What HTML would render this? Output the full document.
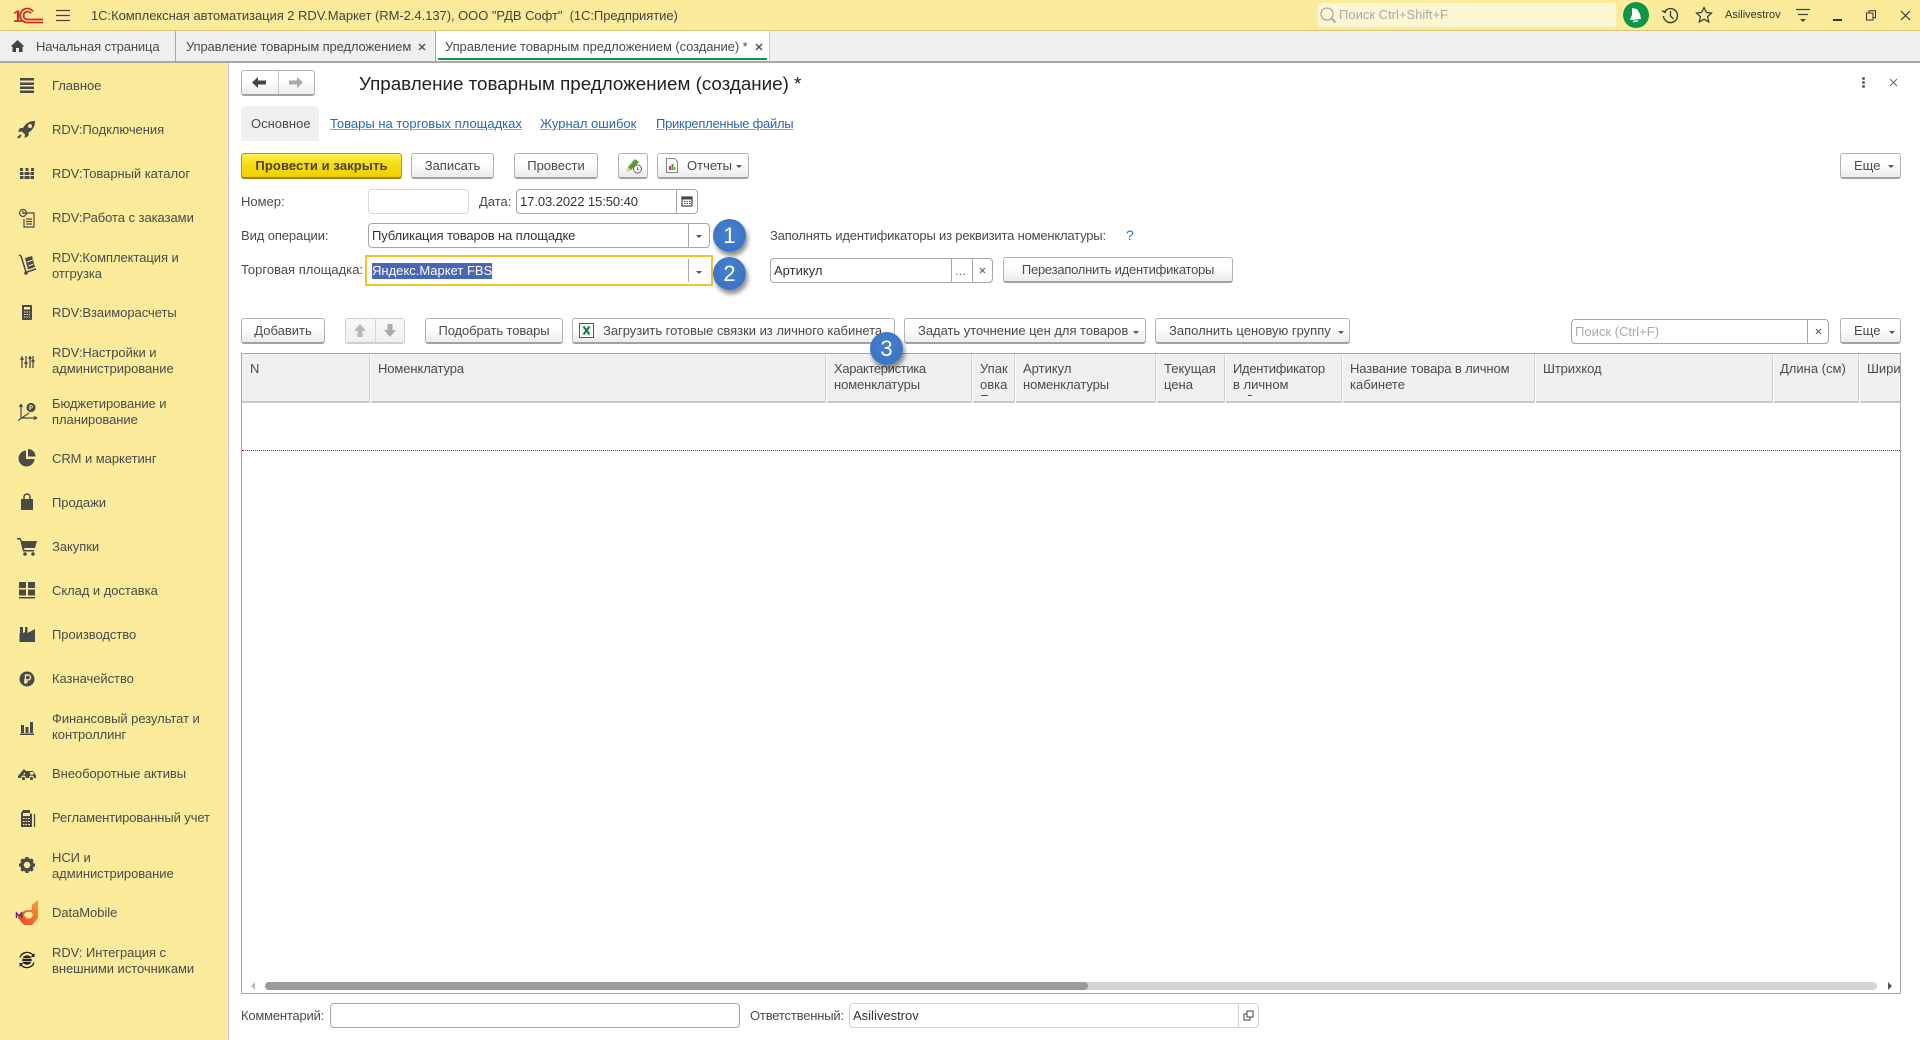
<!DOCTYPE html>
<html lang="ru"><head><meta charset="utf-8"><title>Управление товарным предложением</title>
<style>
html,body{margin:0;padding:0;width:1920px;height:1040px;overflow:hidden;background:#fff}
body{position:relative;font:13px/16px "Liberation Sans",Arial,sans-serif;color:#4b4b4b}
div,span,svg{position:absolute;box-sizing:border-box}
.t{white-space:pre;height:16px;line-height:16px}
.b{display:flex;align-items:center;justify-content:center;white-space:nowrap;height:26px;padding-top:1px;border:1px solid #b4b4b4;border-bottom:2px solid #a2a2a2;border-radius:3px;background:linear-gradient(#fff,#fff 40%,#ebebeb);color:#4b4b4b}
.in{border:1px solid #a6a6a6;border-radius:4px;background:#fff;height:25px}
.sep{top:0;bottom:0;width:1px;background:#a6a6a6}
.tri{width:0;height:0;border-left:3px solid transparent;border-right:3px solid transparent;border-top:3px solid #555}
.c{width:33px;height:33px;border-radius:50%;background:radial-gradient(circle at 50% 40%,#4480d0,#3a70c0);box-shadow:2px 4px 5px rgba(0,0,0,.45);color:#fff;font-size:22px;line-height:33px;text-align:center}
.s{left:52px;color:#4b4b4b;letter-spacing:-.05px}
.i{left:15px;width:24px;height:24px}
.cs{top:1px;height:49px;width:2px;background:#d2d2d2;border-right:1px solid #fff}
.l{color:#2a66b8;text-decoration:underline;text-decoration-color:#7ea6d8}
</style></head><body>

<!-- title bar -->
<div style="left:0;top:0;width:1920px;height:31px;background:#fbeb9b;border-bottom:1px solid #d9c873"></div>
<svg style="left:12px;top:6px" width="34" height="20" viewBox="0 0 34 20"><text x="1" y="16" font-family="Liberation Sans" font-weight="700" font-size="17" fill="#d5262c">1</text><path d="M21 5.500A7 7 0 1 0 15 16.500H31M19 7.500A4 4 0 1 0 15 13.500H31" fill="none" stroke="#d5262c" stroke-width="1.700"/></svg>
<svg style="left:55px;top:8px" width="16" height="16"><path d="M1 2.500h14M1 7.500h14M1 12.500h14" stroke="#444" stroke-width="1.300"/></svg>
<div class="t" style="left:91px;top:8px;font-size:13px;letter-spacing:-.05px;color:#444">1С:Комплексная автоматизация 2 RDV.Маркет (RM-2.4.137), ООО "РДВ Софт"  (1С:Предприятие)</div>
<div style="left:1318px;top:3px;width:298px;height:24px;background:#fcf6d2;border-radius:3px"></div>
<svg style="left:1319px;top:6px" width="18" height="18"><circle cx="8" cy="8" r="6" fill="none" stroke="#aaa" stroke-width="1.300"/><path d="M12.500 12.500l4 4" stroke="#aaa" stroke-width="2"/></svg>
<div class="t" style="left:1339px;top:7px;color:#aaa;font-size:13px">Поиск Ctrl+Shift+F</div>
<div style="left:1623px;top:2px;width:26px;height:26px;border-radius:50%;background:#0e9548"></div>
<svg style="left:1627px;top:6px" width="18" height="18" viewBox="0 0 18 18"><path d="M5 2l5 1 3 5 1 5-11 1 2-5z" fill="#fff"/><path d="M6 15.500l5-.5" stroke="#fff" stroke-width="1.500"/></svg>
<svg style="left:1661px;top:6px" width="19" height="19" viewBox="0 0 19 19" fill="none" stroke="#333" stroke-width="1.300"><path d="M3.500 6A7 7 0 1 1 2.500 10"/><path d="M1 4.500l3 2 1.500-3" /><path d="M9.500 5v5l3 3"/></svg>
<svg style="left:1695px;top:6px" width="18" height="18" viewBox="0 0 18 18"><path d="M9 1.500l2.300 5 5.200.6-3.900 3.500 1.100 5.300L9 13.200l-4.700 2.700 1.100-5.300-3.900-3.500 5.200-.6z" fill="none" stroke="#333" stroke-width="1.200"/></svg>
<div class="t" style="left:1725px;top:7px;font-size:11px;color:#333">Asilivestrov</div>
<svg style="left:1795px;top:8px" width="16" height="16"><path d="M1 1.500h14M3 6.500h10" stroke="#444" stroke-width="1.200"/><path d="M5 11h6l-3 3z" fill="#444"/></svg>
<div style="left:1833px;top:19px;width:9px;height:1.500px;background:#333"></div>
<svg style="left:1866px;top:10px" width="11" height="11" fill="none" stroke="#333"><rect x=".5" y="3" width="6.500" height="7"/><path d="M3 3V.8h6.500v7H7"/></svg>
<svg style="left:1900px;top:10px" width="11" height="11"><path d="M1 1l9 9M10 1l-9 9" stroke="#333" stroke-width="1.100"/></svg>

<!-- tabs -->
<div style="left:0;top:31px;width:1920px;height:32px;background:#f0f0f0;border-bottom:2px solid #a8a8a8"></div>
<div style="left:175px;top:31px;width:1px;height:30px;background:#a8a8a8"></div>
<div style="left:435px;top:31px;width:335px;height:30px;background:#fff;border-left:1px solid #a8a8a8;border-right:1px solid #ccc"></div>
<div style="left:438px;top:58px;width:329px;height:2px;background:#0e9548"></div>
<svg style="left:10px;top:39px" width="15" height="14"><path d="M7.500 1L0.500 7.500h2V13h3.500V9h3v4H12.500V7.500h2z" fill="#444"/></svg>
<div class="t" style="left:36px;top:39px;letter-spacing:-.13px">Начальная страница</div>
<div class="t" style="left:186px;top:39px;letter-spacing:-.13px">Управление товарным предложением</div>
<svg style="left:418px;top:43px" width="8" height="8"><path d="M1 1l6 6M7 1l-6 6" stroke="#555" stroke-width="1.500"/></svg>
<div class="t" style="left:445px;top:39px;letter-spacing:-.08px">Управление товарным предложением (создание) *</div>
<svg style="left:755px;top:43px" width="8" height="8"><path d="M1 1l6 6M7 1l-6 6" stroke="#555" stroke-width="1.500"/></svg>

<!-- sidebar -->
<div style="left:0;top:63px;width:229px;height:977px;background:#fbeb9b;border-right:1px solid #ccc"></div>
<div class="t s" style="top:78px">Главное</div>
<div class="t s" style="top:122px">RDV:Подключения</div>
<div class="t s" style="top:166px">RDV:Товарный каталог</div>
<div class="t s" style="top:210px">RDV:Работа с заказами</div>
<div class="t s" style="top:250px">RDV:Комплектация и</div>
<div class="t s" style="top:266px">отгрузка</div>
<div class="t s" style="top:305px">RDV:Взаиморасчеты</div>
<div class="t s" style="top:345px">RDV:Настройки и</div>
<div class="t s" style="top:361px">администрирование</div>
<div class="t s" style="top:396px">Бюджетирование и</div>
<div class="t s" style="top:412px">планирование</div>
<div class="t s" style="top:451px">CRM и маркетинг</div>
<div class="t s" style="top:495px">Продажи</div>
<div class="t s" style="top:539px">Закупки</div>
<div class="t s" style="top:583px">Склад и доставка</div>
<div class="t s" style="top:627px">Производство</div>
<div class="t s" style="top:671px">Казначейство</div>
<div class="t s" style="top:711px">Финансовый результат и</div>
<div class="t s" style="top:727px">контроллинг</div>
<div class="t s" style="top:766px">Внеоборотные активы</div>
<div class="t s" style="top:810px;letter-spacing:-.1px">Регламентированный учет</div>
<div class="t s" style="top:850px">НСИ и</div>
<div class="t s" style="top:866px">администрирование</div>
<div class="t s" style="top:905px">DataMobile</div>
<div class="t s" style="top:945px">RDV: Интеграция с</div>
<div class="t s" style="top:961px">внешними источниками</div>

<!-- sidebar icons -->
<svg class="i" style="top:73px" viewBox="0 0 24 24" fill="#4a4a4a"><rect x="5" y="5" width="14" height="2.500"/><rect x="5" y="9.500" width="14" height="2.500"/><rect x="5" y="13.500" width="14" height="2.500"/><rect x="5" y="17.500" width="14" height="2.500"/></svg>
<svg class="i" style="top:117px" viewBox="0 0 24 24"><path d="M20 4c-6 0-10 3-12 7H5l-2 4 4-.5 3 3L9.500 21l4-2v-3.500c4-2 6.500-6 6.500-11.500z" fill="#4a4a4a"/><circle cx="15" cy="9" r="2" fill="#fbeb9b"/><path d="M3 21l3-3" stroke="#4a4a4a" stroke-width="2"/></svg>
<svg class="i" style="top:162px" viewBox="0 0 24 24" fill="#4a4a4a"><path d="M5 6h3v3H5zM10.500 6h3v3h-3zM16 6h3v3h-3zM5 10h14v3H5zM5 14h14v3H5z"/><path d="M9 9v8M15 9v8" stroke="#fbeb9b"/></svg>
<svg class="i" style="top:206px" viewBox="0 0 24 24" fill="none" stroke="#4a4a4a" stroke-width="1.200"><path d="M9 7h10v14H9V13"/><circle cx="8" cy="7" r="3.500"/><path d="M8 5v2l1.500 1M11 13h6M11 15.500h6M11 18h6"/></svg>
<svg class="i" style="top:252px" viewBox="0 0 24 24"><path d="M4 3l2 1 5 16" fill="none" stroke="#4a4a4a" stroke-width="1.500"/><circle cx="11" cy="21" r="1.800" fill="#4a4a4a"/><path d="M10 6l7-2 3 11-7 2.500z" fill="#4a4a4a"/><path d="M12 10l6-2M13.500 14l5-2" stroke="#fbeb9b"/><path d="M12 20l9-3" stroke="#4a4a4a" stroke-width="1.500"/></svg>
<svg class="i" style="top:301px" viewBox="0 0 24 24"><rect x="7" y="4" width="10" height="15" rx="1" fill="#4a4a4a"/><rect x="9" y="6" width="6" height="2.500" fill="#fbeb9b"/><path d="M9 11h1.500M11.500 11H13M14 11h1M9 13.500h1.500M11.500 13.500H13M14 13.500h1M9 16h1.500M11.500 16H13M14 16h1" stroke="#fbeb9b"/></svg>
<svg class="i" style="top:349px" viewBox="0 0 24 24" stroke="#4a4a4a" stroke-width="1.300"><path d="M7 7v12M11 7v12M15 7v12M18 7v12"/><path d="M5.500 10h3M9.500 14h3M13.500 9h3M16.500 12h3" stroke-width="2"/></svg>
<svg class="i" style="top:400px" viewBox="0 0 24 24" fill="none" stroke="#4a4a4a" stroke-width="1.200"><path d="M6 4v14h16M6 4L4.500 7M6 4l1.500 3M22 18l-3-1.500M22 18l-3 1.500M3 20.500L14 13"/><circle cx="16" cy="7.500" r="4" fill="#4a4a4a"/><path d="M15 10V5.500h1.500a1.300 1.300 0 0 1 0 2.500H14" stroke="#fbeb9b" stroke-width=".9"/></svg>
<svg class="i" style="top:446px" viewBox="0 0 24 24" fill="#4a4a4a"><path d="M11 4.500a8 8 0 1 0 8.500 8.500H11z"/><path d="M13 3v7.500h7.500A7.500 7.500 0 0 0 13 3z"/></svg>
<svg class="i" style="top:490px" viewBox="0 0 24 24"><path d="M6 9h12v11H6z" fill="#4a4a4a"/><path d="M9 11V7a3 3 0 0 1 6 0v4" fill="none" stroke="#4a4a4a" stroke-width="1.500"/></svg>
<svg class="i" style="top:534px" viewBox="0 0 24 24" fill="#4a4a4a"><path d="M2 4h3.500L7 7h15l-2 7H9l.5 2H19v1.500H8L5 5.500H2z"/><circle cx="10" cy="20" r="1.800"/><circle cx="18" cy="20" r="1.800"/></svg>
<svg class="i" style="top:578px" viewBox="0 0 24 24" fill="#4a4a4a"><path d="M4 4h7v6H4zM13 4h7v6h-7zM4 11.500h7v6H4zM13 11.500h7v6h-7zM4 19h16v1.500H4z"/></svg>
<svg class="i" style="top:622px" viewBox="0 0 24 24" fill="#4a4a4a"><path d="M5 5h3v6l2-1V5h2.500v6L20 7v13H4.500V11.500L5 11z"/></svg>
<svg class="i" style="top:667px" viewBox="0 0 24 24"><circle cx="12" cy="12" r="7.500" fill="#4a4a4a"/><path d="M10.500 17V8h2.500a2.400 2.400 0 0 1 0 5H9M9 15h4" fill="none" stroke="#fbeb9b" stroke-width="1.400"/></svg>
<svg class="i" style="top:715px" viewBox="0 0 24 24" fill="#4a4a4a"><path d="M6 10h3v8H6zM10.500 12h3v6h-3zM15 7h3v11h-3zM5 18.500h14V20H5z"/></svg>
<svg class="i" style="top:761px" viewBox="0 0 24 24" fill="#4a4a4a"><path d="M3 15l6-7 2 2-3 3.500h2V10h8l3 4.500V17h-2a2.500 2.500 0 0 0-5 0H11a2.500 2.500 0 0 0-5 0H3z"/><circle cx="8.500" cy="17.500" r="1.600"/><circle cx="16.500" cy="17.500" r="1.600"/><rect x="15" y="11" width="3.500" height="2.500" fill="#fbeb9b"/></svg>
<svg class="i" style="top:806px" viewBox="0 0 24 24"><path d="M6 7l2-3h7v3l2 1v13H6z" fill="#4a4a4a"/><rect x="8" y="7" width="7" height="3" fill="#fbeb9b"/><path d="M8 12.500h1.500M10.500 12.500H12M13 12.500h2M8 15.500h1.500M10.500 15.500H12M13 15.500h2M8 18.500h1.500M10.500 18.500H12M13 18.500h2" stroke="#fbeb9b"/><path d="M19.500 8v13" stroke="#4a4a4a" stroke-width="1.300"/></svg>
<svg class="i" style="top:853px" viewBox="0 0 24 24"><circle cx="12" cy="12" r="5" fill="none" stroke="#4a4a4a" stroke-width="3.500"/><path d="M12 4v3M12 17v3M4 12h3M17 12h3M6.300 6.300l2.200 2.200M15.500 15.500l2.200 2.200M6.300 17.700l2.200-2.200M15.500 8.500l2.200-2.200" stroke="#4a4a4a" stroke-width="3"/></svg>
<svg style="left:15px;top:899px" width="25" height="27" viewBox="0 0 25 27"><defs><linearGradient id="dm" x1="0" y1="1" x2="1" y2="0"><stop offset="0" stop-color="#ee3b2f"/><stop offset="1" stop-color="#f7a12a"/></linearGradient></defs><path d="M23 1v18l-6 7H9l-6-7 3-5 5-3h6V6z" fill="url(#dm)"/><path d="M8.500 15.500l3-2.500h5l1.500 3-2.500 3.500h-4z" fill="#fbeb9b"/><path d="M1.500 19v-5l2.500 3 2.500-3v5" fill="none" stroke="#5a2a8a" stroke-width="1.400"/></svg>
<svg class="i" style="top:948px" viewBox="0 0 24 24" fill="none" stroke="#222"><path d="M5 9.500A7.500 7.500 0 0 1 18.500 8M19 14.500A7.500 7.500 0 0 1 5.500 16" stroke-width="1.300"/><path d="M19.500 5v4h-4zM4.500 19v-4h4z" fill="#222" stroke="none"/><circle cx="12" cy="12" r="4.800" fill="#222" stroke="none"/><path d="M7.500 10.500h9M7.500 13.500h9" stroke="#fbeb9b" stroke-width=".8"/></svg>

<!-- form header -->
<div class="b" style="left:241px;top:70px;width:74px;height:26px"></div>
<div style="left:278px;top:71px;width:1px;height:23px;background:#c8c8c8"></div>
<svg style="left:251px;top:76px" width="16" height="13"><path d="M1 6.500L7 1v3.500h8v4H7V12z" fill="#444"/></svg>
<svg style="left:288px;top:76px" width="16" height="13"><path d="M15 6.500L9 1v3.500H1v4h8V12z" fill="#aaa"/></svg>
<div class="t" style="left:359px;top:72px;height:24px;line-height:24px;font-size:18.800px;color:#222">Управление товарным предложением (создание) *</div>
<div style="left:1862px;top:77px;width:3px;height:3px;background:#666;border-radius:50%"></div>
<div style="left:1862px;top:81px;width:3px;height:3px;background:#666;border-radius:50%"></div>
<div style="left:1862px;top:85px;width:3px;height:3px;background:#666;border-radius:50%"></div>
<svg style="left:1889px;top:78px" width="9" height="9"><path d="M1 1l7 7M8 1l-7 7" stroke="#666"/></svg>

<div style="left:241px;top:106px;width:78px;height:35px;background:#f0f0f0;border-radius:3px 3px 0 0"></div>
<div class="t" style="left:251px;top:116px">Основное</div>
<div class="t l" style="left:330px;top:116px">Товары на торговых площадках</div>
<div class="t l" style="left:540px;top:116px">Журнал ошибок</div>
<div class="t l" style="left:656px;top:116px;letter-spacing:-.27px">Прикрепленные файлы</div>

<!-- command bar -->
<div class="b" style="left:241px;top:153px;width:161px;background:linear-gradient(#fff05a,#f7dc10 45%,#f2d000);border-color:#b49a10;border-bottom-color:#9a8410;color:#47430a;font-weight:700;letter-spacing:.1px">Провести и закрыть</div>
<div class="b" style="left:411px;top:153px;width:83px">Записать</div>
<div class="b" style="left:514px;top:153px;width:84px">Провести</div>
<div class="b" style="left:618px;top:153px;width:30px"></div>
<svg style="left:624px;top:157px" width="20" height="18" viewBox="0 0 20 18"><path d="M2 15l2-5 7-8 4 3-8 8z" fill="#52a038"/><path d="M2 15l2-5 3 3z" fill="#e8c890"/><circle cx="13.500" cy="12" r="4" fill="#fff" stroke="#666"/><path d="M13.500 10v2.200l1.500.8" stroke="#666" fill="none"/></svg>
<div class="b" style="left:657px;top:153px;width:92px;justify-content:flex-start;padding-left:29px">Отчеты</div>
<svg style="left:665px;top:158px" width="14" height="15" viewBox="0 0 14 15"><path d="M1.500.5h8l3 3v11h-11z" fill="#fff" stroke="#888"/><rect x="4" y="8" width="2" height="4" fill="#d33"/><rect x="6.500" y="6" width="2" height="6" fill="#3a3"/><rect x="9" y="9" width="1.500" height="3" fill="#d80"/></svg>
<div class="tri" style="left:736px;top:165px"></div>
<div class="b" style="left:1840px;top:153px;width:61px;justify-content:flex-start;padding-left:13px">Еще</div>
<div class="tri" style="left:1888px;top:165px"></div>

<!-- fields -->
<div class="t" style="left:241px;top:194px">Номер:</div>
<div class="in" style="left:368px;top:189px;width:101px;border-color:#d8d8d8"></div>
<div class="t" style="left:479px;top:194px">Дата:</div>
<div class="in" style="left:516px;top:189px;width:182px"><div class="sep" style="left:159px"></div></div>
<div class="t" style="left:520px;top:194px;color:#333;letter-spacing:-.07px">17.03.2022 15:50:40</div>
<svg style="left:681px;top:195px" width="12" height="12" viewBox="0 0 12 12"><rect x="1" y="2" width="10" height="9" fill="none" stroke="#444" stroke-width="1.200"/><rect x="1" y="2" width="10" height="2.500" fill="#444"/><path d="M3 6.500h1.500M5.500 6.500H7M8 6.500h1.500M3 8.500h1.500M5.500 8.500H7M8 8.500h1.500" stroke="#444"/></svg>

<div class="t" style="left:241px;top:228px;letter-spacing:-.1px">Вид операции:</div>
<div class="in" style="left:368px;top:223px;width:342px"><div class="sep" style="left:319px"></div></div>
<div class="t" style="left:372px;top:228px;color:#333;letter-spacing:-.12px">Публикация товаров на площадке</div>
<div class="tri" style="left:696px;top:235px"></div>

<div class="t" style="left:241px;top:262px">Торговая площадка:</div>
<div style="left:365px;top:255px;width:348px;height:31px;border:2px solid #f5c52c;background:#fff"></div>
<div style="left:688px;top:259px;width:1px;height:23px;background:#aaa"></div>
<div class="tri" style="left:696px;top:271px"></div>
<div class="t" style="left:372px;top:263px;height:16px;background:#4a66b8;color:#fff">Яндекс.Маркет FBS</div>

<div class="t" style="left:770px;top:228px;letter-spacing:-.19px">Заполнять идентификаторы из реквизита номенклатуры:</div>
<div class="t" style="left:1126px;top:227px;color:#1e78c0;font-size:14px">?</div>
<div class="in" style="left:770px;top:258px;width:223px"><div class="sep" style="left:180px"></div><div class="sep" style="left:201px"></div></div>
<div class="t" style="left:774px;top:263px;color:#333">Артикул</div>
<div class="t" style="left:955px;top:263px;color:#666">...</div>
<svg style="left:979px;top:267px" width="7" height="7"><path d="M1 1l5 5M6 1l-5 5" stroke="#666" stroke-width="1.200"/></svg>
<div class="b" style="left:1003px;top:257px;width:230px;letter-spacing:-.25px">Перезаполнить идентификаторы</div>

<div class="c" style="left:713px;top:219px">1</div>
<div class="c" style="left:713px;top:257px">2</div>

<!-- table toolbar -->
<div class="b" style="left:241px;top:318px;width:84px">Добавить</div>
<div class="b" style="left:345px;top:318px;width:60px;border-color:#d0d0d0;background:linear-gradient(#f8f8f8,#f0f0f0)"></div>
<div style="left:375px;top:319px;width:1px;height:23px;background:#d4d4d4"></div>
<svg style="left:353px;top:323px" width="14" height="15"><path d="M7 1l6 7H9.500v6h-5V8H1z" fill="#b4b9bb"/></svg>
<svg style="left:383px;top:323px" width="14" height="15"><path d="M7 14l6-7H9.500V1h-5v6H1z" fill="#a8adb0"/></svg>
<div class="b" style="left:425px;top:318px;width:138px;letter-spacing:-.1px">Подобрать товары</div>
<div class="b" style="left:572px;top:318px;width:323px;justify-content:flex-start;padding-left:30px;letter-spacing:-.03px">Загрузить готовые связки из личного кабинета</div>
<svg style="left:579px;top:323px" width="15" height="15"><rect x=".5" y=".5" width="14" height="14" fill="#fff" stroke="#1f7a4a"/><rect x="2" y="2" width="11" height="11" fill="#eef5ee"/><path d="M4.500 3.500l6 8M10.500 3.500l-6 8" stroke="#1f7a4a" stroke-width="2"/></svg>
<div class="b" style="left:904px;top:318px;width:242px;justify-content:flex-start;padding-left:13px;letter-spacing:-.03px">Задать уточнение цен для товаров</div>
<div class="tri" style="left:1133px;top:331px"></div>
<div class="b" style="left:1155px;top:318px;width:195px;justify-content:flex-start;padding-left:13px">Заполнить ценовую группу</div>
<div class="tri" style="left:1338px;top:331px"></div>
<div class="in" style="left:1571px;top:319px;width:258px"><div class="sep" style="left:235px"></div></div>
<div class="t" style="left:1575px;top:324px;color:#aaa">Поиск (Ctrl+F)</div>
<svg style="left:1815px;top:328px" width="7" height="7"><path d="M1 1l5 5M6 1l-5 5" stroke="#666" stroke-width="1.200"/></svg>
<div class="b" style="left:1840px;top:318px;width:61px;justify-content:flex-start;padding-left:13px">Еще</div>
<div class="tri" style="left:1889px;top:331px"></div>

<!-- table -->
<div style="left:241px;top:353px;width:1660px;height:641px;border:1px solid #a8a8a8;background:#fff;overflow:hidden">
  <div style="left:0;top:0;width:1658px;height:49px;background:#f0f0f0;border-bottom:2px solid #c8c8c8"></div>
  <div class="cs" style="left:127px;top:0"></div>
  <div class="cs" style="left:583px;top:0"></div>
  <div class="cs" style="left:729px;top:0"></div>
  <div class="cs" style="left:772px;top:0"></div>
  <div class="cs" style="left:913px;top:0"></div>
  <div class="cs" style="left:982px;top:0"></div>
  <div class="cs" style="left:1099px;top:0"></div>
  <div class="cs" style="left:1292px;top:0"></div>
  <div class="cs" style="left:1530px;top:0"></div>
  <div class="cs" style="left:1616px;top:0"></div>
  <div style="left:0;top:96px;width:1658px;height:0;border-top:1px dotted #e00000"></div>
</div>
<div class="t" style="left:250px;top:361px">N</div>
<div class="t" style="left:378px;top:361px;letter-spacing:-.1px">Номенклатура</div>
<div class="t" style="left:834px;top:361px;letter-spacing:-.35px">Характеристика</div>
<div class="t" style="left:834px;top:377px;letter-spacing:-.1px">номенклатуры</div>
<div class="t" style="left:980px;top:361px">Упак</div>
<div class="t" style="left:980px;top:377px">овка</div>
<div style="left:981px;top:395px;width:7px;height:1px;background:#555"></div>
<div class="t" style="left:1023px;top:361px">Артикул</div>
<div class="t" style="left:1023px;top:377px;letter-spacing:-.1px">номенклатуры</div>
<div class="t" style="left:1164px;top:361px">Текущая</div>
<div class="t" style="left:1164px;top:377px">цена</div>
<div class="t" style="left:1233px;top:361px;letter-spacing:-.3px">Идентификатор</div>
<div class="t" style="left:1233px;top:377px">в личном</div>
<div style="left:1248px;top:395px;width:4px;height:1px;background:#555"></div>
<div class="t" style="left:1350px;top:361px;letter-spacing:-.12px">Название товара в личном</div>
<div class="t" style="left:1350px;top:377px">кабинете</div>
<div class="t" style="left:1543px;top:361px;letter-spacing:-.1px">Штрихкод</div>
<div class="t" style="left:1780px;top:361px">Длина (см)</div>
<div style="left:1867px;top:361px;width:33px;height:16px;overflow:hidden;white-space:nowrap">Ширина</div>

<div class="c" style="left:870px;top:332px">3</div>

<!-- scrollbar -->
<div style="left:265px;top:982px;width:1612px;height:8px;background:#d4d4d4;border-radius:4px"></div>
<div style="left:265px;top:982px;width:823px;height:8px;background:#9b9b9b;border-radius:4px"></div>
<svg style="left:250px;top:982px" width="6" height="8"><path d="M5 0v8L1 4z" fill="#bbb"/></svg>
<svg style="left:1887px;top:982px" width="6" height="8"><path d="M1 0v8l4-4z" fill="#555"/></svg>

<!-- footer -->
<div class="t" style="left:241px;top:1008px;letter-spacing:-.2px">Комментарий:</div>
<div class="in" style="left:330px;top:1003px;width:410px"></div>
<div class="t" style="left:750px;top:1008px;letter-spacing:-.18px">Ответственный:</div>
<div class="in" style="left:849px;top:1003px;width:410px;border-color:#d2d2d2"><div class="sep" style="left:388px;background:#d2d2d2"></div></div>
<div class="t" style="left:853px;top:1008px;color:#333">Asilivestrov</div>
<svg style="left:1243px;top:1010px" width="11" height="11" fill="none" stroke="#444"><rect x="4" y="1" width="6" height="6"/><path d="M4 4H1v6h6V7"/></svg>
</body></html>
